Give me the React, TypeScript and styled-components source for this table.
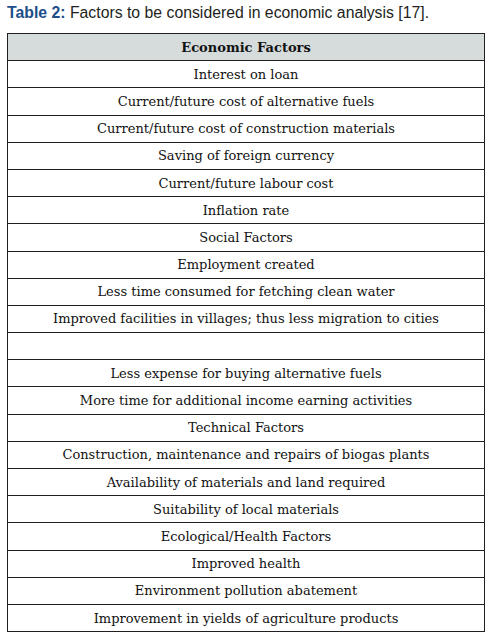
import styled, { createGlobalStyle } from "styled-components";

const GlobalStyle = createGlobalStyle`
  html, body {
    margin: 0;
    padding: 0;
    background: #ffffff;
  }
`;

const Page = styled.div`
  width: 490px;
  height: 633px;
  overflow: hidden;
  padding: 0 0 0 7px;
  box-sizing: border-box;
`;

const Caption = styled.p`
  margin: 0;
  padding-top: 3px;
  height: 30px;
  font-family: "Liberation Sans", Arial, sans-serif;
  font-size: 15.8px;
  line-height: 20px;
  color: #231f20;
  strong {
    color: #1d4e89;
  }
`;

const Table = styled.table`
  width: 478px;
  border-collapse: collapse;
  font-family: "DejaVu Serif", "Liberation Serif", serif;
  color: #111111;
`;

const Row = styled.tr<{ $head?: boolean }>`
  height: 27.2px;
  background: ${(p) => (p.$head ? "#d6dcdc" : "#ffffff")};
`;

const Cell = styled.td<{ $head?: boolean }>`
  border: 1.5px solid #231f20;
  padding: 0;
  text-align: center;
  vertical-align: middle;
  font-size: 13px;
  font-weight: ${(p) => (p.$head ? 700 : 400)};
`;

const rows = [
  "Interest on loan",
  "Current/future cost of alternative fuels",
  "Current/future cost of construction materials",
  "Saving of foreign currency",
  "Current/future labour cost",
  "Inflation rate",
  "Social Factors",
  "Employment created",
  "Less time consumed for fetching clean water",
  "Improved facilities in villages; thus less migration to cities",
  "",
  "Less expense for buying alternative fuels",
  "More time for additional income earning activities",
  "Technical Factors",
  "Construction, maintenance and repairs of biogas plants",
  "Availability of materials and land required",
  "Suitability of local materials",
  "Ecological/Health Factors",
  "Improved health",
  "Environment pollution abatement",
  "Improvement in yields of agriculture products",
];

export default function App() {
  return (
    <>
      <GlobalStyle />
      <Page>
        <Caption>
          <strong>Table 2:</strong> Factors to be considered in economic analysis [17].
        </Caption>
        <Table>
          <tbody>
            <Row $head>
              <Cell $head>Economic Factors</Cell>
            </Row>
            {rows.map((r, i) => (
              <Row key={i}>
                <Cell>{r}</Cell>
              </Row>
            ))}
          </tbody>
        </Table>
      </Page>
    </>
  );
}
